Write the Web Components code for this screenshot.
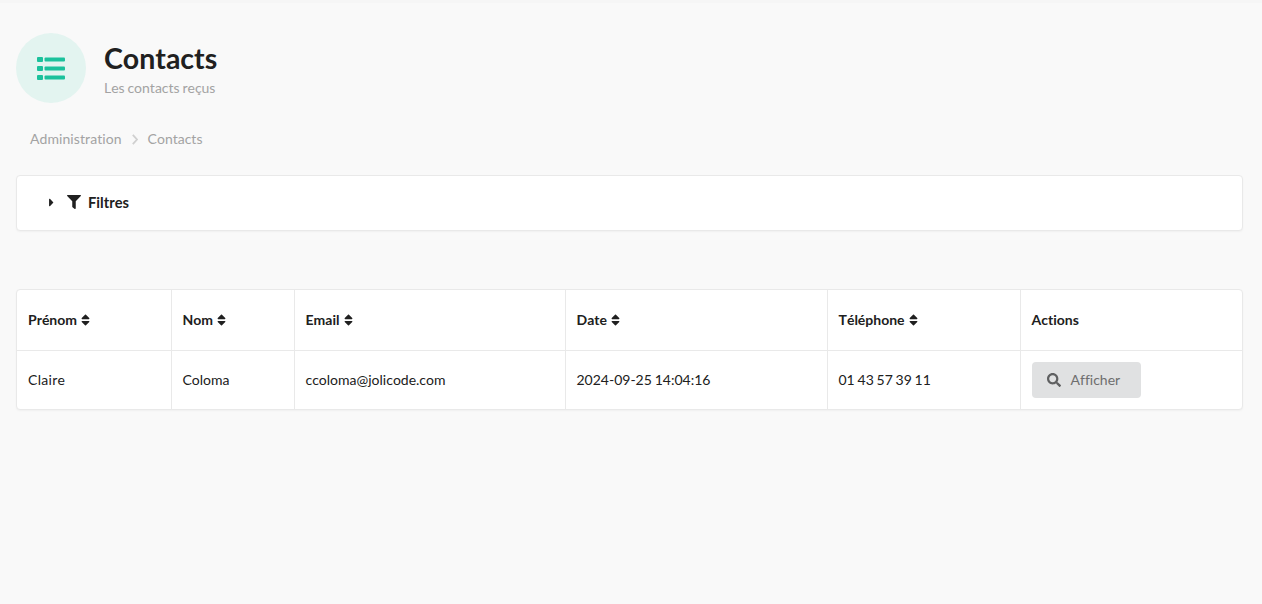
<!DOCTYPE html>
<html lang="fr">
<head>
<meta charset="utf-8">
<title>Contacts</title>
<style>
  html, body { margin: 0; padding: 0; height: 100%; }
  body {
    background: #f9f9f9;
    font-family: Lato, "Liberation Sans", sans-serif;
    font-variant-ligatures: none;
    font-kerning: none;
    word-spacing: -.8px;
    color: #202020;
  }
</style>
</head>
<body>
<contacts-page></contacts-page>
<script>
const SORT_ICON = `<svg class="sort" viewBox="0 0 320 512" width="9" height="14" fill="#202020"><path d="M41 288h238c21.4 0 32.1 25.9 17 41L177 448c-9.4 9.4-24.6 9.4-33.9 0L24 329c-15.1-15.1-4.4-41 17-41zm255-105L177 64c-9.4-9.4-24.6-9.4-33.9 0L24 183c-15.1 15.1-4.4 41 17 41h238c21.4 0 32.1-25.9 17-41z"/></svg>`;

class PageHeader extends HTMLElement {
  constructor() {
    super();
    this.attachShadow({ mode: "open" });
  }
  connectedCallback() {
    this.shadowRoot.innerHTML = `
    <style>
      :host { display: flex; align-items: center; gap: 18px; padding: 30px 0 0 16px; }
      .circle {
        width: 70px;
        height: 70px;
        border-radius: 50%;
        background: #e3f4f0;
        display: flex;
        align-items: center;
        justify-content: center;
      }
      svg { display: block; }
      h1 { margin: 0; font-size: 28.5px; line-height: 36px; font-weight: 700; color: #202020; }
      p { margin: 3px 0 0; font-size: 14px; line-height: 18px; color: #a3a3a3; }
    </style>
    <div class="circle">
      <svg width="28" height="24" viewBox="0 0 28 24" fill="#1bc19c">
        <rect x="0" y="1" width="6" height="5" rx="1"/>
        <rect x="0" y="10" width="6" height="5" rx="1"/>
        <rect x="0" y="19" width="6" height="5" rx="1"/>
        <rect x="7.5" y="1.5" width="20.5" height="4" rx="1"/>
        <rect x="7.5" y="10.5" width="20.5" height="4" rx="1"/>
        <rect x="7.5" y="19.5" width="20.5" height="4" rx="1"/>
      </svg>
    </div>
    <div class="text">
      <h1><slot name="title"></slot></h1>
      <p><slot name="subtitle"></slot></p>
    </div>`;
  }
}
customElements.define("page-header", PageHeader);

class BreadCrumb extends HTMLElement {
  constructor() {
    super();
    this.attachShadow({ mode: "open" });
  }
  connectedCallback() {
    this.shadowRoot.innerHTML = `
    <style>
      :host { display: flex; align-items: center; gap: 10px; padding: 26px 0 0 30px; font-size: 14px; line-height: 20px; color: #a3a3a3; }
      svg { display: block; }
      .first { letter-spacing: .07px; }
    </style>
    <span class="first">Administration</span>
    <svg width="6" height="11" viewBox="0 0 6 11" fill="none" stroke="#d0d0d0" stroke-width="1.8"><path d="M.8 .8L5 5.5L.8 10.2"/></svg>
    <span>Contacts</span>`;
  }
}
customElements.define("bread-crumb", BreadCrumb);

class FilterPanel extends HTMLElement {
  constructor() {
    super();
    this.attachShadow({ mode: "open" });
  }
  connectedCallback() {
    this.shadowRoot.innerHTML = `
    <style>
      :host {
        display: flex;
        align-items: center;
        box-sizing: border-box;
        height: 56px;
        margin: 26px 19px 0 16px;
        padding: 0 0 2px 32px;
        background: #fff;
        border: 1px solid #e9e9e9;
        border-radius: 4px;
        box-shadow: 0 1px 2px rgba(0,0,0,.04);
        font-size: 14.7px;
        font-weight: 700;
        color: #202020;
      }
      .caret { margin-right: 13px; }
      .funnel { margin-right: 7px; }
    </style>
    <svg class="caret" viewBox="0 0 192 512" width="5" height="13" fill="#202020"><path d="M0 384.662V127.338c0-17.818 21.543-26.741 34.142-14.142l128.662 128.662c7.81 7.81 7.81 20.474 0 28.284L34.142 398.804C21.543 411.404 0 402.48 0 384.662z"/></svg>
    <svg class="funnel" viewBox="0 0 512 512" width="14" height="14" fill="#202020"><path d="M487.976 0H24.028C2.71 0-8.047 25.866 7.058 40.971L192 225.941V432c0 7.831 3.821 15.17 10.237 19.662l80 55.98C298.02 518.69 320 507.493 320 487.98V225.941l184.947-184.97C520.021 25.896 509.338 0 487.976 0z"/></svg>
    <span>Filtres</span>`;
  }
}
customElements.define("filter-panel", FilterPanel);

class ActionButton extends HTMLElement {
  constructor() {
    super();
    this.attachShadow({ mode: "open" });
  }
  connectedCallback() {
    this.shadowRoot.innerHTML = `
    <style>
      :host {
        display: inline-flex;
        align-items: center;
        box-sizing: border-box;
        width: 109px;
        height: 36px;
        padding-left: 15px;
        gap: 10px;
        background: #e0e1e2;
        border-radius: 4px;
        font-size: 14px;
        color: #6e6e6e;
        vertical-align: middle;
      }
      svg { display: block; }
    </style>
    <svg viewBox="0 0 512 512" width="14" height="14" fill="#5f6061"><path d="M505 442.7L405.3 343c-4.5-4.5-10.6-7-17-7H372c27.6-35.3 44-79.7 44-128C416 93.1 322.9 0 208 0S0 93.1 0 208s93.1 208 208 208c48.3 0 92.7-16.4 128-44v16.3c0 6.4 2.5 12.5 7 17l99.7 99.7c9.4 9.4 24.6 9.4 33.9 0l28.3-28.3c9.4-9.4 9.4-24.6.1-34zM208 336c-70.7 0-128-57.2-128-128 0-70.7 57.2-128 128-128 70.7 0 128 57.2 128 128 0 70.7-57.2 128-128 128z"/></svg>
    <span><slot></slot></span>`;
  }
}
customElements.define("action-button", ActionButton);

class ContactsTable extends HTMLElement {
  constructor() {
    super();
    this.attachShadow({ mode: "open" });
  }
  connectedCallback() {
    const columns = [
      ["Prénom", 154], ["Nom", 123], ["Email", 271], ["Date", 262], ["Téléphone", 193]
    ];
    const row = ["Claire", "Coloma", "ccoloma@jolicode.com", "2024-09-25 14:04:16", "01 43 57 39 11"];
    this.shadowRoot.innerHTML = `
    <style>
      :host {
        display: block;
        margin: 58px 19px 0 16px;
        background: #fff;
        border: 1px solid #e9e9e9;
        border-radius: 4px;
        box-shadow: 0 1px 2px rgba(0,0,0,.04);
        font-size: 14px;
        color: #202020;
      }
      table { width: 100%; table-layout: fixed; border-collapse: collapse; }
      th, td { padding: 0 11px; text-align: left; border-left: 1px solid #e9e9e9; box-sizing: border-box; }
      th:first-child, td:first-child { border-left: 0; }
      th { height: 60px; font-weight: 700; border-bottom: 1px solid #e9e9e9; }
      td { height: 59px; font-weight: 400; }
      td:first-child { letter-spacing: .3px; }
      .sort { vertical-align: -2px; margin-left: 1.8px; }
    </style>
    <table>
      <colgroup>
        ${columns.map(c => `<col style="width:${c[1]}px">`).join("")}
        <col>
      </colgroup>
      <thead>
        <tr>
          ${columns.map(c => `<th>${c[0]} ${SORT_ICON}</th>`).join("")}
          <th>Actions</th>
        </tr>
      </thead>
      <tbody>
        <tr>
          ${row.map(v => `<td>${v}</td>`).join("")}
          <td><action-button>Afficher</action-button></td>
        </tr>
      </tbody>
    </table>`;
  }
}
customElements.define("contacts-table", ContactsTable);

class ContactsPage extends HTMLElement {
  constructor() {
    super();
    this.attachShadow({ mode: "open" });
  }
  connectedCallback() {
    this.shadowRoot.innerHTML = `
    <style>
      :host { display: block; min-height: 604px; box-sizing: border-box; border-top: 3px solid #f6f6f6; }
    </style>
    <page-header>
      <span slot="title">Contacts</span>
      <span slot="subtitle">Les contacts reçus</span>
    </page-header>
    <bread-crumb></bread-crumb>
    <filter-panel></filter-panel>
    <contacts-table></contacts-table>`;
  }
}
customElements.define("contacts-page", ContactsPage);
</script>
</body>
</html>
